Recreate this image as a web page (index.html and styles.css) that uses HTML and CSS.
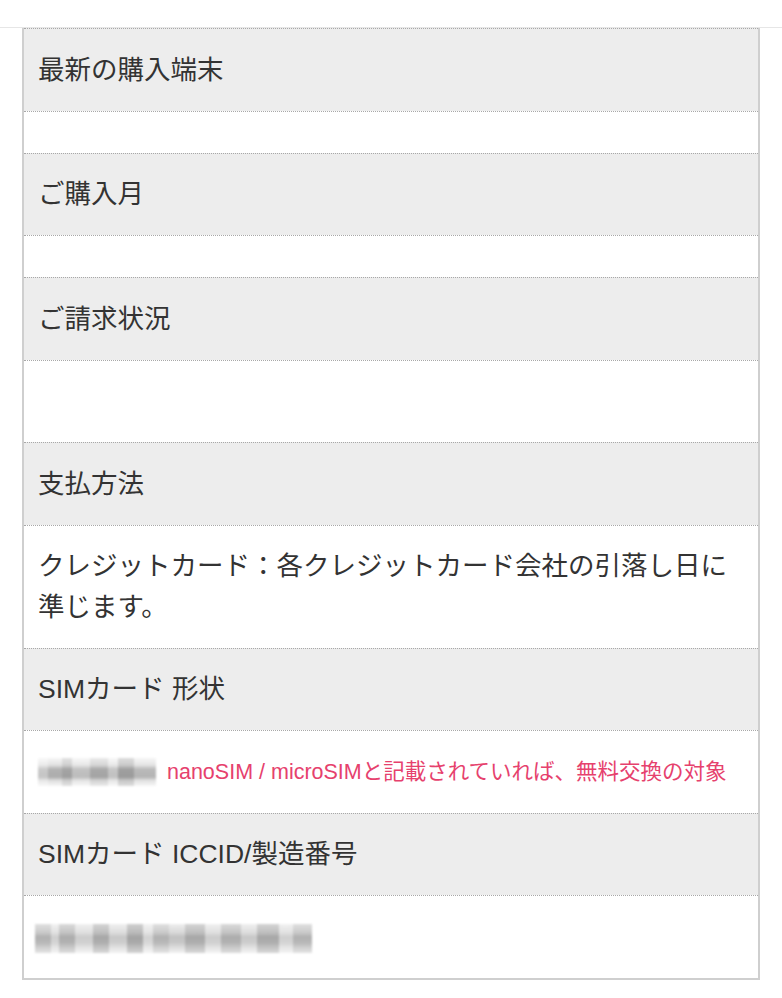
FILE: index.html
```html
<!DOCTYPE html>
<html lang="ja">
<head>
<meta charset="utf-8">
<link rel="stylesheet" href="styles.css">
</head>
<body>
<div class="topbar"></div>
<div class="table">
  <div class="cell head">最新の購入端末</div>
  <div class="cell val"></div>
  <div class="cell head">ご購入月</div>
  <div class="cell val"></div>
  <div class="cell head">ご請求状況</div>
  <div class="cell val">&nbsp;</div>
  <div class="cell head">支払方法</div>
  <div class="cell val">クレジットカード：各クレジットカード会社の引落し日に<br>準じます。</div>
  <div class="cell head">SIMカード 形状</div>
  <div class="cell val small"><span class="blur blur-short"></span><span class="note">nanoSIM / microSIMと記載されていれば、無料交換の対象</span></div>
  <div class="cell head">SIMカード ICCID/製造番号</div>
  <div class="cell val"><span class="blur blur-long"></span></div>
</div>
</body>
</html>
```

FILE: styles.css
```css
html, body {
  margin: 0;
  padding: 0;
  background: #fff;
}
body {
  font-family: "Liberation Sans", "Noto Sans CJK JP", sans-serif;
  color: #333;
  width: 782px;
}
.topbar {
  height: 27px;
  border-bottom: 1px solid #e6e6e6;
}
.table {
  margin: 0 22px;
  border-left: 2px solid #cfcfcf;
  border-right: 2px solid #cfcfcf;
  border-bottom: 2px solid #cfcfcf;
}
.cell {
  border-top: 1px dotted #a8a8a8;
  padding: 20.5px 14px 20.5px 14px;
  font-size: 26.5px;
  line-height: 40.5px;
  white-space: nowrap;
}
.head {
  background: #ededed;
}
.val {
  background: #fff;
}
.small {
  display: flex;
  align-items: center;
  height: 40.5px;
}
.note {
  color: #e6416d;
  font-size: 21.5px;
  margin-left: 11px;
}
.blur {
  display: inline-block;
  vertical-align: middle;
  filter: blur(1.2px);
}
.blur-short {
  width: 118px;
  height: 28px;
  background:
    linear-gradient(90deg, rgba(255,255,255,0.3) 0 10px, rgba(0,0,0,0) 10px 24px, rgba(0,0,0,0.08) 24px 34px, rgba(255,255,255,0.2) 34px 52px, rgba(0,0,0,0.05) 52px 70px, rgba(255,255,255,0.25) 70px 80px, rgba(0,0,0,0.1) 80px 96px, rgba(255,255,255,0.1) 96px 118px),
    linear-gradient(to bottom, #f6f6f6 0, #e2e2e2 25%, #b2b2b2 40%, #acacac 68%, #dedede 80%, #f7f7f7 100%);
}
.blur-long {
  width: 277px;
  height: 29px;
  margin-left: -3px;
  background:
    linear-gradient(90deg, rgba(0,0,0,0.05) 0 16px, rgba(255,255,255,0.3) 16px 24px, rgba(0,0,0,0.08) 24px 40px, rgba(255,255,255,0.25) 40px 58px, rgba(0,0,0,0.1) 58px 74px, rgba(255,255,255,0.2) 74px 92px, rgba(0,0,0,0.12) 92px 108px, rgba(255,255,255,0.35) 108px 118px, rgba(0,0,0,0.05) 118px 134px, rgba(255,255,255,0.1) 134px 150px, rgba(0,0,0,0.1) 150px 170px, rgba(255,255,255,0.25) 170px 186px, rgba(0,0,0,0.08) 186px 206px, rgba(255,255,255,0.2) 206px 222px, rgba(0,0,0,0.1) 222px 244px, rgba(255,255,255,0.3) 244px 258px, rgba(0,0,0,0.05) 258px 277px),
    linear-gradient(to bottom, #ececec 0, #d4d4d4 30%, #bababa 45%, #c2c2c2 65%, #d9d9d9 80%, #f0f0f0 100%);
}
```
